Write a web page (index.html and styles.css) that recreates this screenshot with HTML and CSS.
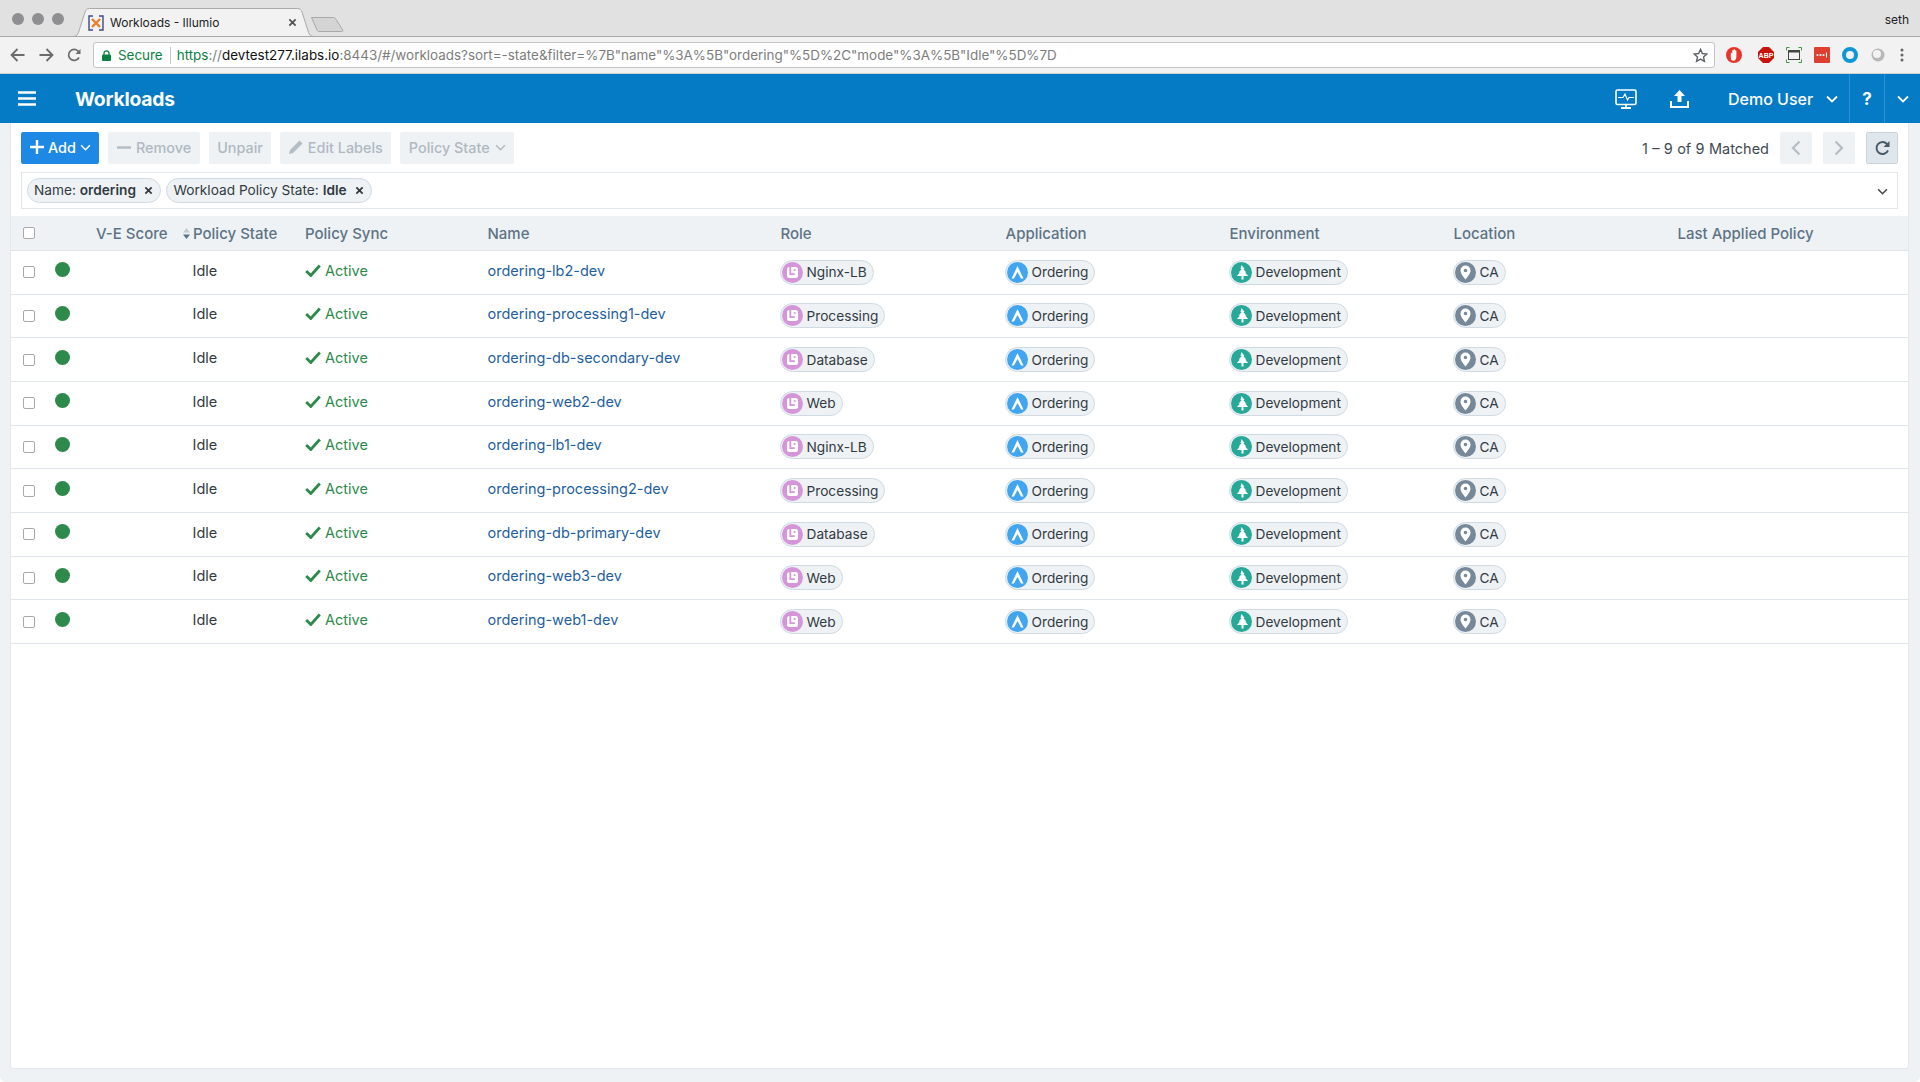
FILE: index.html
```html
<!DOCTYPE html>
<html lang="en">
<head>
<meta charset="utf-8">
<title>Workloads - Illumio</title>
<link rel="stylesheet" href="styles.css">
</head>
<body>
<svg class="defs" width="0" height="0" aria-hidden="true">
  <symbol id="i-role" viewBox="0 0 21 21"><circle cx="10.5" cy="10.5" r="10.5" fill="#d496d9"/><rect x="5" y="5" width="11" height="11" rx="2.5" fill="#fff"/><path d="M8.300 5v7.200h4.500" fill="none" stroke="#d496d9" stroke-width="1.800"/><circle cx="12.600" cy="8" r="1.100" fill="#d496d9"/></symbol>
  <symbol id="i-app" viewBox="0 0 21 21"><circle cx="10.5" cy="10.5" r="10.5" fill="#42a5f0"/><path d="M4.500 16.500L10.500 4l6 12.500-2.500 0-3.500-6.500-3.500 6.500z" fill="#fff"/></symbol>
  <symbol id="i-env" viewBox="0 0 21 21"><circle cx="10.5" cy="10.5" r="10.5" fill="#26a998"/><path d="M10.5 3l3 4h-1.200l3 3.500h-1.200l3 3.500h-4.600v3.500h-2v-3.500h-4.600l3-3.500h-1.200l3-3.500h-1.200z" fill="#fff"/></symbol>
  <symbol id="i-loc" viewBox="0 0 21 21"><circle cx="10.5" cy="10.5" r="10.500" fill="#75899a"/><path fill-rule="evenodd" d="M10.500 3.500a5 5 0 0 0-5 5c0 3.500 5 9 5 9s5-5.500 5-9a5 5 0 0 0-5-5zm0 3.200a1.800 1.800 0 1 1 0 3.600 1.800 1.800 0 0 1 0-3.600z" fill="#fff"/></symbol>
  <symbol id="i-check" viewBox="0 0 16 13"><path d="M1.200 7l4.600 4.500L14.800 1.500" fill="none" stroke="#2d8a4a" stroke-width="2.800"/></symbol>
  <symbol id="i-chev" viewBox="0 0 12 8"><path d="M1 1.500l5 5 5-5" fill="none" stroke="currentColor" stroke-width="1.800"/></symbol>
  <symbol id="i-x" viewBox="0 0 10 10"><path d="M1.500 1.500l7 7M8.500 1.500l-7 7" fill="none" stroke="currentColor" stroke-width="2"/></symbol>
</svg>

<div class="tabstrip">
  <div class="lights"><i></i><i></i><i></i></div>
  <div class="tab">
    <svg class="tab-shape" width="241" height="29" viewBox="0 0 241 29"><path d="M0 28.500c3 0 4.500-1.500 5.500-4L12 4c.8-2.300 2-3.500 4.500-3.500h208c2.500 0 3.700 1.200 4.500 3.500l6.500 20.500c1 2.500 2.500 4 5.500 4z" fill="#f2f2f2" stroke="#a9a9a9"/></svg>
    <svg class="favicon" width="16" height="16" viewBox="0 0 16 16"><path d="M5 1H1v14h4M11 1h4v14h-4" fill="none" stroke="#3e4a8c" stroke-width="1.400"/><path d="M4 4l8 8M12 4l-8 8" stroke="#ef7d2c" stroke-width="2.400"/></svg>
    <span class="tab-title">Workloads - Illumio</span>
    <svg class="tab-close" width="9" height="9"><use href="#i-x"/></svg>
  </div>
  <svg class="newtab" width="33" height="16" viewBox="0 0 33 16"><path d="M.5 1.500h22c1 0 1.700.5 2.200 1.500l7 11c.5 1 0 1.500-1 1.500H8c-1 0-1.700-.5-2-1.500z" fill="#d4d4d4" stroke="#a9a9a9"/></svg>
  <span class="os-user">seth</span>
</div>

<div class="toolbar">
  <svg class="nav" width="15" height="14" viewBox="0 0 15 14"><path d="M14.500 7H2M7.500 1L1.500 7l6 6" fill="none" stroke="#6b6b6b" stroke-width="1.800"/></svg>
  <svg class="nav" width="15" height="14" viewBox="0 0 15 14"><path d="M.5 7H13M7.500 1l6 6-6 6" fill="none" stroke="#6b6b6b" stroke-width="1.800"/></svg>
  <svg class="nav" width="14" height="14" viewBox="0 0 14 14"><path d="M12 9.500A5.500 5.500 0 1 1 11 3L12.500 5" fill="none" stroke="#6b6b6b" stroke-width="1.700"/><path d="M13.500 1v5h-5z" fill="#6b6b6b"/></svg>
  <div class="omnibox">
    <svg class="lock" width="9" height="11" viewBox="0 0 9 11"><path d="M2 5V3.300a2.500 2.500 0 0 1 5 0V5" fill="none" stroke="#0b8043" stroke-width="1.300"/><rect y="4.500" width="9" height="6.500" rx="1" fill="#0b8043"/></svg>
    <span class="secure">Secure</span>
    <span class="omni-div"></span>
    <span class="url"><span class="scheme">https</span>://<span class="host">devtest277.ilabs.io</span>:8443/#/workloads?sort=-state&amp;filter=%7B"name"%3A%5B"ordering"%5D%2C"mode"%3A%5B"Idle"%5D%7D</span>
    <svg class="star" width="15" height="15" viewBox="0 0 16 16"><path d="M8 1.500l2 4.400 4.800.5-3.600 3.200 1 4.700L8 11.900l-4.200 2.400 1-4.700L1.200 6.400 6 5.900z" fill="none" stroke="#5f6368" stroke-width="1.500"/></svg>
  </div>
  <div class="exts">
    <svg class="ext-first" width="16" height="16" viewBox="0 0 16 16"><circle cx="8" cy="8" r="8" fill="#e8352b"/><path d="M4.800 6.500c0-1 1.300-1 1.400 0V3.700c0-1 1.400-1 1.400 0V3c0-1 1.400-1 1.400 0v.8c.1-.9 1.400-.9 1.400 0v6c0 2.500-1.300 4-3 4-1.500 0-2.600-1.200-2.600-3z" fill="#fff"/></svg>
    <svg width="16" height="16" viewBox="0 0 16 16"><path d="M5 0h6l5 5v6l-5 5H5l-5-5V5z" fill="#c5130a"/><text x="8" y="10.600" class="abp">ABP</text></svg>
    <svg width="16" height="16" viewBox="0 0 16 16"><path d="M.5 3.500V.5h3M12.500.5h3v3M15.500 12.500v3h-3M3.500 15.500h-3v-3" fill="none" stroke="#3c9a3c"/><rect x="2.500" y="3.500" width="11" height="9" fill="none" stroke="#444"/><path d="M2.500 4.500h11" stroke="#444" stroke-width="2"/></svg>
    <svg width="16" height="16" viewBox="0 0 16 16"><rect width="16" height="16" rx="1" fill="#df3f2f"/><circle cx="3.500" cy="8" r="1.100" fill="#fff"/><circle cx="6.500" cy="8" r="1.100" fill="#fff"/><circle cx="9.500" cy="8" r="1.100" fill="#fff"/><path d="M12.500 5.500v5" stroke="#fff"/></svg>
    <svg width="16" height="16" viewBox="0 0 16 16"><circle cx="8" cy="8" r="6" fill="none" stroke="#0d96d8" stroke-width="4"/></svg>
    <svg width="16" height="16" viewBox="0 0 16 16"><circle cx="8" cy="8" r="6.500" fill="#b8b8b8"/><circle cx="7" cy="7" r="4" fill="#f3f3f3"/></svg>
    <svg class="ext-last" width="4" height="14" viewBox="0 0 4 14"><circle cx="2" cy="2" r="1.500" fill="#666"/><circle cx="2" cy="7" r="1.500" fill="#666"/><circle cx="2" cy="12" r="1.500" fill="#666"/></svg>
  </div>
</div>

<header class="app-header">
  <svg class="hamburger" width="18" height="15" viewBox="0 0 18 15"><path d="M0 1.500h18M0 7.500h18M0 13.500h18" stroke="#fff" stroke-width="2.400"/></svg>
  <h1 class="page-title">Workloads</h1>
  <svg class="hdr-monitor" width="22" height="20" viewBox="0 0 22 20"><rect x="1" y="1" width="20" height="14.500" rx="1.500" fill="none" stroke="#fff" stroke-width="1.600"/><path d="M3 8.500h5l2-3.500 2.500 6 1.500-2.500h5" fill="none" stroke="#fff" stroke-width="1.200"/><path d="M11 15.500v3M6 19h10" stroke="#fff" stroke-width="1.800"/></svg>
  <svg class="hdr-upload" width="19" height="18" viewBox="0 0 19 18"><path d="M9.500 0l5.500 6h-3.500v6h-4V6H4z" fill="#fff"/><path d="M1 11v6h17v-6" fill="none" stroke="#fff" stroke-width="2"/></svg>
  <span class="hdr-user">Demo User</span>
  <svg class="hdr-chev" width="12" height="8"><use href="#i-chev"/></svg>
  <span class="hdr-help">?</span>
  <span class="hdr-more"><svg width="12" height="8"><use href="#i-chev"/></svg></span>
</header>

<div class="page">
  <main class="panel">
    <div class="actions">
      <button class="btn btn-primary"><svg width="14" height="14" viewBox="0 0 14 14"><path d="M7 0v14M0 7h14" stroke="#fff" stroke-width="2.400"/></svg><span>Add</span><svg class="btn-chev" width="11" height="7"><use href="#i-chev"/></svg></button>
      <button class="btn"><svg width="14" height="3" viewBox="0 0 14 3"><path d="M0 1.500h14" stroke="#b4bdc4" stroke-width="2.400"/></svg><span>Remove</span></button>
      <button class="btn"><span>Unpair</span></button>
      <button class="btn"><svg width="14" height="14" viewBox="0 0 14 14"><path d="M0 14l1-4L10.500.5l3 3L4 13z" fill="#b4bdc4"/></svg><span>Edit Labels</span></button>
      <button class="btn"><span>Policy State</span><svg class="btn-chev" width="11" height="7"><use href="#i-chev"/></svg></button>
      <div class="pager">
        <span class="pager-count">1 – 9 of 9 Matched</span>
        <button class="pg-btn"><svg width="10" height="16" viewBox="0 0 10 16"><path d="M8.500 1.500L2 8l6.500 6.500" fill="none" stroke="#b4bdc4" stroke-width="2.200"/></svg></button>
        <button class="pg-btn"><svg width="10" height="16" viewBox="0 0 10 16"><path d="M1.500 1.500L8 8l-6.500 6.500" fill="none" stroke="#b4bdc4" stroke-width="2.200"/></svg></button>
        <button class="pg-btn pg-refresh"><svg width="15" height="16" viewBox="0 0 15 16"><path d="M13 10.500A6 6 0 1 1 12 4L13.500 6" fill="none" stroke="#475a68" stroke-width="1.900"/><path d="M14.500 1v6h-6z" fill="#475a68"/></svg></button>
      </div>
    </div>
    <div class="filter">
      <span class="fchip">Name: <b>ordering</b><svg width="9" height="9"><use href="#i-x"/></svg></span>
      <span class="fchip">Workload Policy State: <b>Idle</b><svg width="9" height="9"><use href="#i-x"/></svg></span>
      <svg class="filter-chev" width="11" height="7"><use href="#i-chev"/></svg>
    </div>

    <div class="grid-head">
      <span class="c-check"><span class="cb"></span></span>
      <span></span>
      <span>V-E Score</span>
      <span class="th-sort"><svg width="7" height="11" viewBox="0 0 7 11"><path d="M3.500 0L7 4.500H0z" fill="#c2ccd4"/><path d="M3.500 11L0 6.500h7z" fill="#5d7385"/></svg>Policy State</span>
      <span>Policy Sync</span>
      <span>Name</span>
      <span class="th-label">Role</span>
      <span class="th-label">Application</span>
      <span class="th-label">Environment</span>
      <span class="th-label">Location</span>
      <span class="th-label">Last Applied Policy</span>
    </div>

    <div class="row"><span class="c-check"><span class="cb"></span></span><span class="dot"></span><span></span><span class="state">Idle</span><span class="sync"><svg width="16" height="13"><use href="#i-check"/></svg>Active</span><a class="name">ordering-lb2-dev</a><span class="chip"><svg width="21" height="21"><use href="#i-role"/></svg>Nginx-LB</span><span class="chip"><svg width="21" height="21"><use href="#i-app"/></svg>Ordering</span><span class="chip"><svg width="21" height="21"><use href="#i-env"/></svg>Development</span><span class="chip"><svg width="21" height="21"><use href="#i-loc"/></svg>CA</span><span></span></div>
    <div class="row"><span class="c-check"><span class="cb"></span></span><span class="dot"></span><span></span><span class="state">Idle</span><span class="sync"><svg width="16" height="13"><use href="#i-check"/></svg>Active</span><a class="name">ordering-processing1-dev</a><span class="chip"><svg width="21" height="21"><use href="#i-role"/></svg>Processing</span><span class="chip"><svg width="21" height="21"><use href="#i-app"/></svg>Ordering</span><span class="chip"><svg width="21" height="21"><use href="#i-env"/></svg>Development</span><span class="chip"><svg width="21" height="21"><use href="#i-loc"/></svg>CA</span><span></span></div>
    <div class="row"><span class="c-check"><span class="cb"></span></span><span class="dot"></span><span></span><span class="state">Idle</span><span class="sync"><svg width="16" height="13"><use href="#i-check"/></svg>Active</span><a class="name">ordering-db-secondary-dev</a><span class="chip"><svg width="21" height="21"><use href="#i-role"/></svg>Database</span><span class="chip"><svg width="21" height="21"><use href="#i-app"/></svg>Ordering</span><span class="chip"><svg width="21" height="21"><use href="#i-env"/></svg>Development</span><span class="chip"><svg width="21" height="21"><use href="#i-loc"/></svg>CA</span><span></span></div>
    <div class="row"><span class="c-check"><span class="cb"></span></span><span class="dot"></span><span></span><span class="state">Idle</span><span class="sync"><svg width="16" height="13"><use href="#i-check"/></svg>Active</span><a class="name">ordering-web2-dev</a><span class="chip"><svg width="21" height="21"><use href="#i-role"/></svg>Web</span><span class="chip"><svg width="21" height="21"><use href="#i-app"/></svg>Ordering</span><span class="chip"><svg width="21" height="21"><use href="#i-env"/></svg>Development</span><span class="chip"><svg width="21" height="21"><use href="#i-loc"/></svg>CA</span><span></span></div>
    <div class="row"><span class="c-check"><span class="cb"></span></span><span class="dot"></span><span></span><span class="state">Idle</span><span class="sync"><svg width="16" height="13"><use href="#i-check"/></svg>Active</span><a class="name">ordering-lb1-dev</a><span class="chip"><svg width="21" height="21"><use href="#i-role"/></svg>Nginx-LB</span><span class="chip"><svg width="21" height="21"><use href="#i-app"/></svg>Ordering</span><span class="chip"><svg width="21" height="21"><use href="#i-env"/></svg>Development</span><span class="chip"><svg width="21" height="21"><use href="#i-loc"/></svg>CA</span><span></span></div>
    <div class="row"><span class="c-check"><span class="cb"></span></span><span class="dot"></span><span></span><span class="state">Idle</span><span class="sync"><svg width="16" height="13"><use href="#i-check"/></svg>Active</span><a class="name">ordering-processing2-dev</a><span class="chip"><svg width="21" height="21"><use href="#i-role"/></svg>Processing</span><span class="chip"><svg width="21" height="21"><use href="#i-app"/></svg>Ordering</span><span class="chip"><svg width="21" height="21"><use href="#i-env"/></svg>Development</span><span class="chip"><svg width="21" height="21"><use href="#i-loc"/></svg>CA</span><span></span></div>
    <div class="row"><span class="c-check"><span class="cb"></span></span><span class="dot"></span><span></span><span class="state">Idle</span><span class="sync"><svg width="16" height="13"><use href="#i-check"/></svg>Active</span><a class="name">ordering-db-primary-dev</a><span class="chip"><svg width="21" height="21"><use href="#i-role"/></svg>Database</span><span class="chip"><svg width="21" height="21"><use href="#i-app"/></svg>Ordering</span><span class="chip"><svg width="21" height="21"><use href="#i-env"/></svg>Development</span><span class="chip"><svg width="21" height="21"><use href="#i-loc"/></svg>CA</span><span></span></div>
    <div class="row"><span class="c-check"><span class="cb"></span></span><span class="dot"></span><span></span><span class="state">Idle</span><span class="sync"><svg width="16" height="13"><use href="#i-check"/></svg>Active</span><a class="name">ordering-web3-dev</a><span class="chip"><svg width="21" height="21"><use href="#i-role"/></svg>Web</span><span class="chip"><svg width="21" height="21"><use href="#i-app"/></svg>Ordering</span><span class="chip"><svg width="21" height="21"><use href="#i-env"/></svg>Development</span><span class="chip"><svg width="21" height="21"><use href="#i-loc"/></svg>CA</span><span></span></div>
    <div class="row"><span class="c-check"><span class="cb"></span></span><span class="dot"></span><span></span><span class="state">Idle</span><span class="sync"><svg width="16" height="13"><use href="#i-check"/></svg>Active</span><a class="name">ordering-web1-dev</a><span class="chip"><svg width="21" height="21"><use href="#i-role"/></svg>Web</span><span class="chip"><svg width="21" height="21"><use href="#i-app"/></svg>Ordering</span><span class="chip"><svg width="21" height="21"><use href="#i-env"/></svg>Development</span><span class="chip"><svg width="21" height="21"><use href="#i-loc"/></svg>CA</span><span></span></div>
  </main>
</div>
</body>
</html>
```

FILE: styles.css
```css
* { box-sizing: border-box; }
html, body { margin: 0; height: 100%; }
body {
  display: flex;
  flex-direction: column;
  height: 1082px;
  overflow: hidden;
  background: #fff;
  font-family: Inter, "Liberation Sans", sans-serif;
  font-size: 14.5px;
  color: #333b42;
}
.defs { position: absolute; }

/* browser chrome */
.tabstrip {
  height: 37px;
  flex: none;
  display: flex;
  align-items: flex-end;
  background: #e1e1e1;
  border-bottom: 1px solid #a9a9a9;
  padding-left: 73px;
  position: relative;
}
.lights { position: absolute; left: 12px; top: 13px; display: flex; gap: 8px; }
.lights i { width: 12px; height: 12px; border-radius: 50%; background: #8f8e91; }
.tab {
  position: relative;
  width: 241px;
  height: 29px;
  margin-bottom: -1px;
  display: flex;
  align-items: center;
  padding: 0 0 0 15px;
  font-size: 12px;
  color: #222;
}
.tab-shape { position: absolute; left: 0; top: 0; }
.favicon { position: relative; }
.tab-title { position: relative; margin-left: 6px; width: 179px; }
.tab-close { position: relative; color: #555; margin-left: -1px; }
.newtab { align-self: flex-start; margin: 16px 0 0 -3px; }
.os-user { position: absolute; right: 11px; top: 12px; font-size: 12px; color: #222; }

.toolbar {
  height: 37px;
  flex: none;
  display: flex;
  align-items: center;
  background: #f2f2f2;
  border-bottom: 1px solid #d0d0d0;
  padding-left: 10px;
}
.nav { margin-right: 13.5px; }
.omnibox {
  width: 1622px;
  height: 26px;
  margin-left: -1.500px;
  display: flex;
  align-items: center;
  background: #fff;
  border: 1px solid #c4c4c4;
  border-radius: 3px;
  padding-left: 8px;
  font-size: 13.43px;
  color: #7d7d7d;
}
.secure { color: #0b8043; margin-left: 7px; }
.omni-div { width: 1px; height: 17px; background: #c8c8c8; margin: 0 6px 0 7px; }
.scheme { color: #0b8043; }
.host { color: #111; }
.url { flex: 1; white-space: nowrap; overflow: hidden; }
.star { margin-right: 6px; }
.exts { display: flex; align-items: center; gap: 12px; margin-left: 11px; }
.ext-first { margin-right: 4px; }
.ext-last { margin-left: 2px; }

/* app header */
.app-header {
  height: 49px;
  flex: none;
  display: flex;
  align-items: center;
  background: #047bc4;
  color: #fff;
  padding-left: 18px;
}
.page-title { margin: 0 0 0 39px; font-size: 19.3px; font-weight: 700; flex: 1; letter-spacing: -.2px; }
.hdr-monitor { margin-right: 33px; }
.hdr-upload { margin-right: 39px; }
.hdr-user { font-size: 16px; font-weight: 500; width: 98px; }
.hdr-chev { margin-right: 11px; }
.hdr-help {
  align-self: stretch;
  width: 35px;
  display: flex;
  align-items: center;
  justify-content: center;
  border-left: 1px solid #2a92d4;
  font-size: 17px;
  font-weight: 700;
}
.hdr-more {
  align-self: stretch;
  width: 36px;
  display: flex;
  align-items: center;
  justify-content: center;
  border-left: 1px solid #2a92d4;
}

/* page */
.page {
  flex: 1;
  min-height: 0;
  display: flex;
  background: #eef2f5;
  padding: 0 11px 13px 10px;
  border-radius: 0 0 6px 6px;
}
.panel {
  flex: 1;
  background: #fff;
  border: 1px solid #e3e8ec;
  border-top: 0;
  border-radius: 0 0 3px 3px;
}
.actions {
  display: flex;
  align-items: center;
  gap: 8px;
  padding: 9px 10px 0 10px;
}
.btn {
  height: 32px;
  display: inline-flex;
  align-items: center;
  gap: 5px;
  padding: 0 8.500px 2px;
  border: 0;
  border-radius: 2px;
  background: #eef2f5;
  color: #b0b9c1;
  font: 500 14.4px Inter, "Liberation Sans", sans-serif;
}
.btn + .btn { margin-left: 1px; }
.btn-primary { background: #1e88e5; color: #fff; gap: 4.500px; padding-right: 8px; }
.pager { margin-left: auto; display: flex; align-items: center; gap: 11px; }
.pager-count { color: #3f4a53; word-spacing: .3px; }
.pg-btn {
  width: 32px;
  height: 32px;
  display: flex;
  align-items: center;
  justify-content: center;
  padding: 0;
  border: 0;
  border-radius: 2px;
  background: #eef2f5;
}
.pg-refresh { background: #dfe6ec; border: 1px solid #c9d5dd; }
.filter {
  height: 37px;
  margin: 8px 10px 7px;
  display: flex;
  align-items: center;
  gap: 5px;
  padding-left: 5px;
  border: 1px solid #e3e8ec;
  position: relative;
  font-size: 13.7px;
}
.fchip {
  height: 25px;
  display: inline-flex;
  align-items: center;
  padding: 0 7px 0 6px;
  border: 1px solid #cfdae2;
  border-radius: 13px;
  background: #eef2f5;
  white-space: pre;
  color: #333b42;
  margin-bottom: 1px;
}
.fchip b { font-weight: 600; }
.fchip svg { margin-left: 8.500px; color: #333b42; }
.filter-chev { position: absolute; right: 9px; top: 15px; color: #444; }

/* grid */
.grid-head, .row {
  display: grid;
  grid-template-columns: 43px 42px 88px 121px 182.5px 292px 225px 224px 224px 224px 1fr;
  align-items: center;
}
.grid-head {
  height: 35px;
  background: #eef2f5;
  border-bottom: 1px solid #dde4ea;
  color: #5d7385;
  font-weight: 500;
  font-size: 15px;
}
.row { height: 43.67px; border-bottom: 1px solid #dfe5ea; }
.th-label { padding-left: 1px; }
.th-sort { display: flex; align-items: center; gap: 3px; margin-left: -1px; }
.c-check { padding-left: 12px; display: flex; }
.cb {
  width: 12px;
  height: 12px;
  border: 1px solid #a9a9a9;
  border-radius: 2px;
  background: #fff;
}
.dot { width: 15px; height: 15px; border-radius: 50%; background: #2d8a4a; margin: 0 0 5px 1px; }
.state { padding-left: 8.500px; margin-bottom: 4px; }
.sync { display: flex; align-items: center; gap: 4px; color: #2d8a4a; margin-bottom: 4px; }
.name { color: #1f5f9e; margin-bottom: 4px; }
.chip {
  justify-self: start;
  height: 25px;
  display: inline-flex;
  align-items: center;
  gap: 4px;
  padding: 0 6px 0 1px;
  border: 1px solid #cfdae2;
  border-radius: 13px;
  background: #eef2f5;
  color: #333b42;
  font-size: 13.7px;
}
.abp { font: 700 7px "Liberation Sans", sans-serif; fill: #fff; text-anchor: middle; }
```
